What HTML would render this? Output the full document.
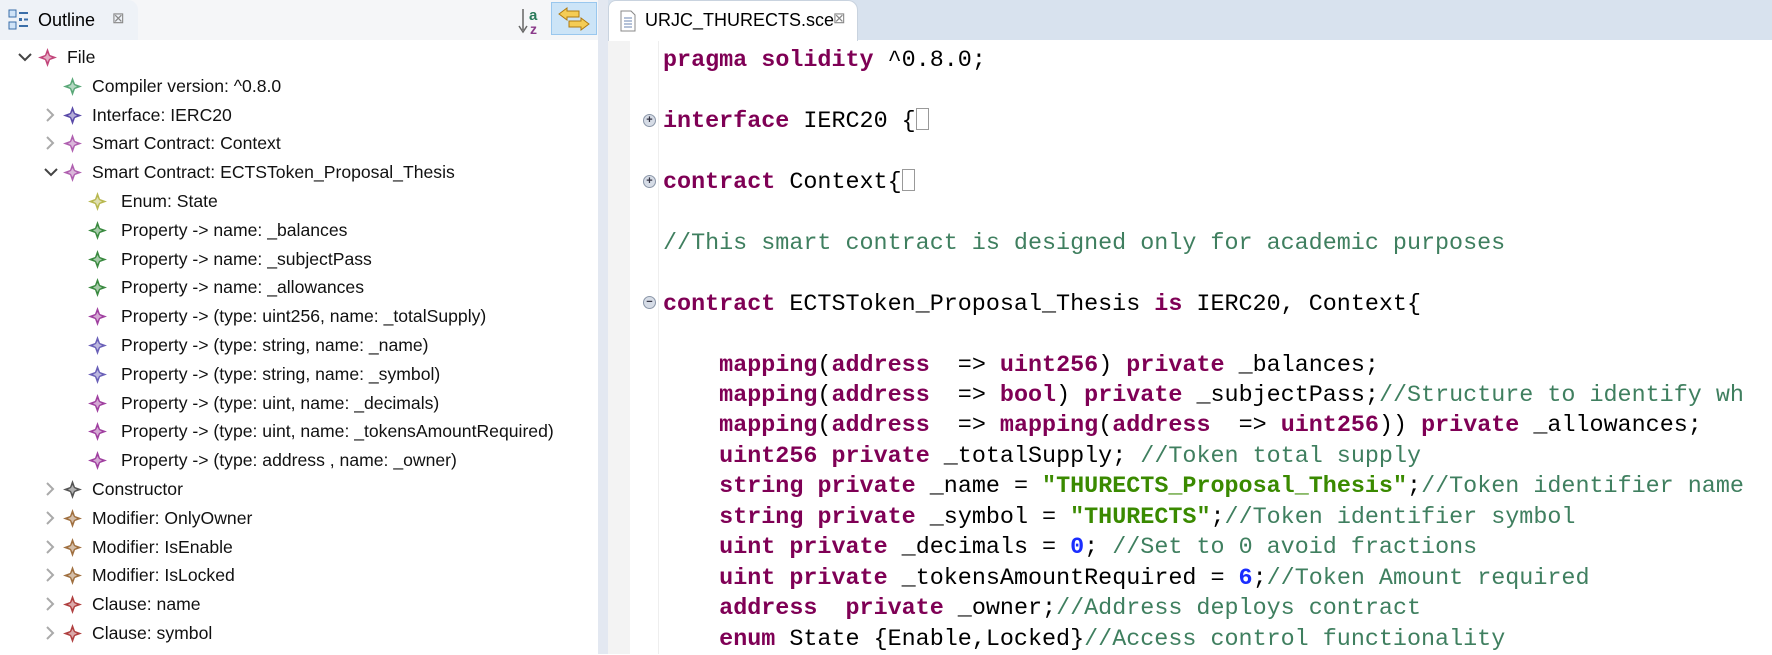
<!DOCTYPE html>
<html><head><meta charset="utf-8"><style>
*{margin:0;padding:0;box-sizing:border-box}
body{width:1772px;height:654px;overflow:hidden;background:#fff;font-family:"Liberation Sans",sans-serif;position:relative}
#left{position:absolute;left:0;top:0;width:598px;height:654px;background:#fff}
#lhead{position:absolute;left:0;top:0;width:598px;height:40px;background:#f5f6f8}
#ltab{position:absolute;left:0;top:0;width:138px;height:40px;background:#eef2f7;border-radius:0 10px 0 0}
#gap{position:absolute;left:598px;top:0;width:10px;height:654px;background:#e3e8f1}
#right{position:absolute;left:608px;top:0;right:0;height:654px;background:#fff}
#rhead{position:absolute;left:0;top:0;right:0;height:40px;background:#d8e2ee}
#rtab{position:absolute;left:0;top:0;width:250px;height:41px;background:#fff;border-radius:8px 10px 0 0;border:1px solid #c9d3df;border-bottom:none}
.t{position:absolute;font-size:18px;color:#000;white-space:nowrap;line-height:28px}
.row{position:absolute;height:28px;line-height:28px;font-size:17.6px;white-space:nowrap;color:#111}
.ic{position:absolute;top:5px}
.tx{position:absolute;top:0}
#gut{position:absolute;left:0;top:41px;width:22px;height:613px;background:#f3f3f3}
#code{position:absolute;left:663px;top:46px;font-family:"Liberation Mono",monospace;font-size:23.4px;line-height:30.45px;white-space:pre;color:#000}
.k{color:#7f0055;font-weight:bold}.c{color:#3f7f5f}.s{color:#3a8a00;font-weight:bold}.n{color:#1a2dff;font-weight:bold}
.fold{position:absolute;left:643px;width:13px;height:13px;border-radius:50%;background:#d6dce6;border:1px solid #8a96a8;font-size:11px;line-height:10px;text-align:center;color:#334;font-family:"Liberation Sans",sans-serif;font-weight:bold}
.box{display:inline-block;width:13px;height:22px;border:1px solid #999;vertical-align:-3px;position:relative}
</style></head><body>
<div id="left">
<div id="lhead"><div id="ltab"></div>
<svg style="position:absolute;left:8px;top:9px" width="22" height="22" viewBox="0 0 22 22"><rect x="1" y="1" width="7" height="7" fill="#cfe3f7" stroke="#3a6ea8"/><rect x="1" y="13" width="7" height="7" fill="#cfe3f7" stroke="#3a6ea8"/><line x1="11" y1="4" x2="20" y2="4" stroke="#3a6ea8" stroke-width="2"/><rect x="11" y="9" width="3" height="3" fill="#3a6ea8"/><line x1="16" y1="10.5" x2="20" y2="10.5" stroke="#3a6ea8" stroke-width="2"/><line x1="11" y1="17" x2="20" y2="17" stroke="#3a6ea8" stroke-width="2"/></svg>
<div class="t" style="left:38px;top:6px">Outline</div>
<div class="t" style="left:112px;top:5px;font-size:15px;color:#888">⊠</div>
<svg style="position:absolute;left:518px;top:6px" width="32" height="30"><line x1="5" y1="3" x2="5" y2="24" stroke="#666" stroke-width="1.5"/><path d="M1 20 L5 26 L9 20" fill="none" stroke="#666" stroke-width="1.5"/><text x="11" y="14" font-family="Liberation Sans" font-weight="bold" font-size="15" fill="#2a7a5a">a</text><text x="12" y="28" font-family="Liberation Sans" font-weight="bold" font-size="14" fill="#8a3a8a">z</text></svg>
<div style="position:absolute;left:551px;top:2px;width:46px;height:33px;background:#cce4f7;border:1px solid #99c7ee"></div>
<svg style="position:absolute;left:557px;top:6px" width="34" height="26"><path d="M2 8 L10 2 L10 5 L22 5 L22 11 L10 11 L10 14 Z" fill="#f5cc55" stroke="#b07a10"/><path d="M32 18 L24 12 L24 15 L12 15 L12 21 L24 21 L24 24 Z" fill="#f5cc55" stroke="#b07a10"/></svg>
</div>
<div id="tree"></div>
</div>
<div id="gap"></div>
<div id="right">
<div id="rhead"><div id="rtab"></div>
<svg style="position:absolute;left:12px;top:10px" width="16" height="22"><path d="M1 1 H11 L15 5 V21 H1 Z" fill="#fff" stroke="#888"/><g stroke="#6b86b0"><line x1="4" y1="8" x2="12" y2="8"/><line x1="4" y1="11" x2="12" y2="11"/><line x1="4" y1="14" x2="12" y2="14"/><line x1="4" y1="17" x2="12" y2="17"/></g></svg>
<div class="t" style="left:37px;top:6px">URJC_THURECTS.sce</div>
<div class="t" style="left:225px;top:5px;font-size:15px;color:#888">⊠</div>
</div>
<div id="gut"></div>
<div style="position:absolute;left:50px;top:41px;width:1px;height:613px;background:#eee"></div>
</div>
<div class="fold" style="top:114px">+</div>
<div class="fold" style="top:175px">+</div>
<div class="fold" style="top:296px">−</div>
<div id="code"><span class="k">pragma</span> <span class="k">solidity</span> ^0.8.0;

<span class="k">interface</span> IERC20 {<span class="box"></span>

<span class="k">contract</span> Context{<span class="box"></span>

<span class="c">//This smart contract is designed only for academic purposes</span>

<span class="k">contract</span> ECTSToken_Proposal_Thesis <span class="k">is</span> IERC20, Context{

    <span class="k">mapping</span>(<span class="k">address</span>  => <span class="k">uint256</span>) <span class="k">private</span> _balances;
    <span class="k">mapping</span>(<span class="k">address</span>  => <span class="k">bool</span>) <span class="k">private</span> _subjectPass;<span class="c">//Structure to identify wh</span>
    <span class="k">mapping</span>(<span class="k">address</span>  => <span class="k">mapping</span>(<span class="k">address</span>  => <span class="k">uint256</span>)) <span class="k">private</span> _allowances;
    <span class="k">uint256</span> <span class="k">private</span> _totalSupply; <span class="c">//Token total supply</span>
    <span class="k">string</span> <span class="k">private</span> _name = <span class="s">"THURECTS_Proposal_Thesis"</span>;<span class="c">//Token identifier name</span>
    <span class="k">string</span> <span class="k">private</span> _symbol = <span class="s">"THURECTS"</span>;<span class="c">//Token identifier symbol</span>
    <span class="k">uint</span> <span class="k">private</span> _decimals = <span class="n">0</span>; <span class="c">//Set to 0 avoid fractions</span>
    <span class="k">uint</span> <span class="k">private</span> _tokensAmountRequired = <span class="n">6</span>;<span class="c">//Token Amount required</span>
    <span class="k">address</span>  <span class="k">private</span> _owner;<span class="c">//Address deploys contract</span>
    <span class="k">enum</span> State {Enable,Locked}<span class="c">//Access control functionality</span></div>
<script>
var rows=[
[0,'v','#c2457a','File'],
[1,'','#5aa878','Compiler version: ^0.8.0'],
[1,'>','#5a4aa8','Interface: IERC20'],
[1,'>','#b060b0','Smart Contract: Context'],
[1,'v','#b060b0','Smart Contract: ECTSToken_Proposal_Thesis'],
[2,'','#b8b850','Enum: State'],
[2,'','#3a8a40','Property -> name: _balances'],
[2,'','#3a8a40','Property -> name: _subjectPass'],
[2,'','#3a8a40','Property -> name: _allowances'],
[2,'','#a040a0','Property -> (type: uint256, name: _totalSupply)'],
[2,'','#6a60b8','Property -> (type: string, name: _name)'],
[2,'','#6a60b8','Property -> (type: string, name: _symbol)'],
[2,'','#a040a0','Property -> (type: uint, name: _decimals)'],
[2,'','#a040a0','Property -> (type: uint, name: _tokensAmountRequired)'],
[2,'','#a040a0','Property -> (type: address , name: _owner)'],
[1,'>','#555','Constructor'],
[1,'>','#a07040','Modifier: OnlyOwner'],
[1,'>','#a07040','Modifier: IsEnable'],
[1,'>','#a07040','Modifier: IsLocked'],
[1,'>','#b04040','Clause: name'],
[1,'>','#b04040','Clause: symbol']];
var h='';
rows.forEach(function(r,i){
var lv=r[0];var y=43+28.8*i;var ax=18, ix=38, tx=67;
if(lv==2){ix=88;tx=121;ax=70}
if(lv==1){ix=63;tx=92;ax=44}
h+='<div class="row" style="left:0;top:'+y+'px;width:598px">';
if(r[1]=='v')h+='<svg class="ic" style="left:'+ax+'px;top:10px" width="14" height="10"><path d="M1 1 L7 7 L13 1" fill="none" stroke="#444" stroke-width="2"/></svg>';
if(r[1]=='>')h+='<svg class="ic" style="left:'+(ax+2)+'px;top:7px" width="10" height="14"><path d="M1 1 L7 7 L1 13" fill="none" stroke="#aaa" stroke-width="2"/></svg>';
h+='<svg class="ic" style="left:'+ix+'px;top:5px" width="19" height="19"><path d="M9.5 0 L12 7 L19 9.5 L12 12 L9.5 19 L7 12 L0 9.5 L7 7 Z" fill="'+r[2]+'"/><path d="M9.5 5 L11 8 L14 9.5 L11 11 L9.5 14 L8 11 L5 9.5 L8 8 Z" fill="#fff" opacity="0.55"/></svg>';
h+='<span class="tx" style="left:'+tx+'px">'+r[3].replace(/>/g,'&gt;')+'</span></div>';
});
document.getElementById('tree').innerHTML=h;
</script>
</body></html>
